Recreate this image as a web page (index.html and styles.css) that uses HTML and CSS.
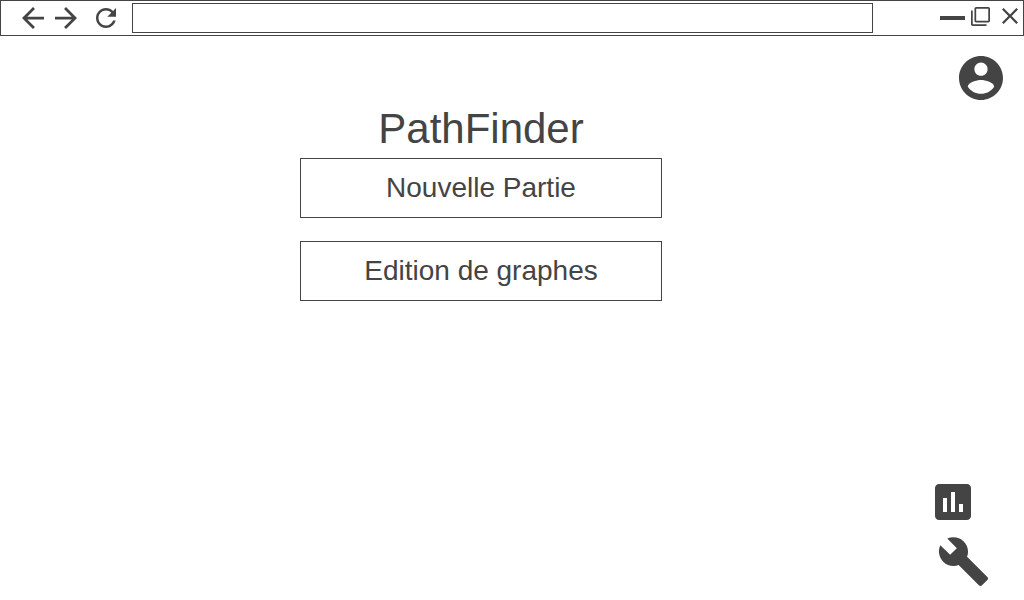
FILE: index.html
```html
<!DOCTYPE html>
<html lang="fr">
<head>
  <meta charset="utf-8">
  <meta name="viewport" content="width=device-width, initial-scale=1">
  <title>PathFinder</title>
  <link rel="stylesheet" href="styles.css">
</head>
<body class="page">
  <header class="browser-bar">
    <nav class="browser-nav" aria-label="Navigation">
      <button class="icon-button" type="button" aria-label="Page précédente">
        <svg class="icon-arrow" viewBox="4 4 16 16"><path d="M20 11H7.83l5.59-5.59L12 4l-8 8 8 8 1.41-1.41L7.83 13H20v-2z"/></svg>
      </button>
      <button class="icon-button" type="button" aria-label="Page suivante">
        <svg class="icon-arrow" viewBox="4 4 16 16"><path d="M12 4l-1.41 1.41L16.17 11H4v2h12.17l-5.58 5.59L12 20l8-8z"/></svg>
      </button>
      <button class="icon-button reload" type="button" aria-label="Actualiser">
        <svg class="icon-reload" viewBox="4 4 16 16"><path d="M17.65 6.35C16.2 4.9 14.21 4 12 4c-4.42 0-7.99 3.58-7.99 8s3.57 8 7.99 8c3.73 0 6.84-2.55 7.73-6h-2.08c-.82 2.33-3.04 4-5.65 4-3.31 0-6-2.69-6-6s2.69-6 6-6c1.66 0 3.14.69 4.22 1.78L13 11h7V4l-2.35 2.35z"/></svg>
      </button>
    </nav>
    <input class="address" type="text" aria-label="Adresse">
    <div class="window-controls">
      <button class="icon-button minimize" type="button" aria-label="Réduire">
        <svg class="icon-minimize" viewBox="0 0 25 4"><path d="M0 0h25v4H0z"/></svg>
      </button>
      <button class="icon-button" type="button" aria-label="Agrandir">
        <svg class="icon-restore" viewBox="1 1 22 22"><path d="M3 5H1v16c0 1.1.9 2 2 2h16v-2H3V5zm18-4H7c-1.100 0-2 .9-2 2v14c0 1.100.9 2 2 2h14c1.100 0 2-.9 2-2V3c0-1.100-.9-2-2-2zm0 16H7V3h14v14z"/></svg>
      </button>
      <button class="icon-button close" type="button" aria-label="Fermer">
        <svg class="icon-close" viewBox="5 5 14 14"><path d="M19 6.410L17.590 5 12 10.590 6.410 5 5 6.410 10.590 12 5 17.590 6.410 19 12 13.410 17.590 19 19 17.590 13.410 12z"/></svg>
      </button>
    </div>
  </header>

  <div class="content">
    <main class="menu">
      <h1 class="title">PathFinder</h1>
      <div class="menu-list">
        <button class="menu-button" type="button">Nouvelle Partie</button>
        <button class="menu-button" type="button">Edition de graphes</button>
      </div>
    </main>
    <aside class="rail">
      <button class="icon-button account" type="button" aria-label="Compte">
        <svg class="icon-account" viewBox="2 2 20 20"><path d="M12 2C6.480 2 2 6.480 2 12s4.480 10 10 10 10-4.480 10-10S17.520 2 12 2zm0 3c1.660 0 3 1.340 3 3s-1.340 3-3 3-3-1.340-3-3 1.340-3 3-3zm0 14.200c-2.500 0-4.710-1.280-6-3.220.03-1.990 4-3.080 6-3.080 1.990 0 5.970 1.090 6 3.080-1.290 1.940-3.500 3.220-6 3.220z"/></svg>
      </button>
      <div class="tools">
        <button class="icon-button stats" type="button" aria-label="Statistiques">
          <svg class="icon-stats" viewBox="3 3 18 18"><path d="M19 3H5c-1.100 0-2 .9-2 2v14c0 1.100.9 2 2 2h14c1.100 0 2-.9 2-2V5c0-1.100-.9-2-2-2zM9 17H7v-7h2v7zm4 0h-2V7h2v10zm4 0h-2v-4h2v4z"/></svg>
        </button>
        <button class="icon-button" type="button" aria-label="Paramètres">
          <svg class="icon-wrench" viewBox="1 1 22 22"><path d="M22.700 19l-9.100-9.100c.9-2.300.4-5-1.500-6.900-2-2-5-2.400-7.400-1.300L9 6 6 9 1.600 4.700C.4 7.100.9 10.100 2.900 12.100c1.900 1.900 4.600 2.400 6.900 1.500l9.100 9.100c.4.4 1 .4 1.400 0l2.300-2.300c.5-.4.5-1.100.1-1.400z"/></svg>
        </button>
      </div>
    </aside>
  </div>
</body>
</html>
```

FILE: styles.css
```css
* {
  box-sizing: border-box;
}

.page {
  display: flex;
  flex-direction: column;
  min-height: 100vh;
  margin: 0;
  background: #fff;
  color: #444;
  font-family: "Liberation Sans", Arial, sans-serif;
}

.icon-button {
  display: block;
  flex: none;
  padding: 0;
  border: 0;
  background: none;
  color: inherit;
  cursor: pointer;
}

.icon-button svg {
  display: block;
  fill: currentColor;
}

.browser-bar {
  display: flex;
  align-items: center;
  padding: 2px 5px 2px 21px;
  border: 1px solid #444;
}

.browser-nav {
  display: flex;
  align-items: center;
  gap: 11px;
  margin-right: 16px;
}

.reload {
  margin-left: 8px;
}

.address {
  flex: 1;
  min-width: 0;
  height: 30px;
  padding: 0 8px;
  border: 1px solid #444;
  background: #fff;
  color: inherit;
  font: inherit;
}

.window-controls {
  display: flex;
  align-items: center;
  gap: 6px;
  margin-left: 67px;
  padding-bottom: 4px;
}

.minimize {
  padding-top: 4px;
}

.close {
  margin-left: 6px;
}

.icon-arrow {
  width: 22px;
  height: 22px;
}

.icon-reload {
  width: 20px;
  height: 20px;
}

.icon-minimize {
  width: 25px;
  height: 4px;
}

.icon-restore {
  width: 19px;
  height: 19px;
}

.icon-close {
  width: 16px;
  height: 16px;
}

.content {
  display: grid;
  flex: 1;
  grid-template-columns: 300fr 362fr 362fr;
}

.menu {
  grid-column: 2;
  padding-top: 69px;
}

.title {
  margin: 0 0 5px;
  font-size: 42px;
  font-weight: 400;
  line-height: 48px;
  text-align: center;
}

.menu-list {
  display: grid;
  gap: 23px;
}

.menu-button {
  height: 60px;
  padding: 0 16px;
  border: 1px solid #444;
  background: #fff;
  color: inherit;
  font-family: inherit;
  font-size: 28px;
  cursor: pointer;
}

.rail {
  display: flex;
  flex-direction: column;
  align-items: flex-end;
  justify-content: space-between;
  padding: 20px 21px 14px 0;
}

.tools {
  display: grid;
  justify-items: end;
  gap: 17px;
  padding-right: 15px;
}

.stats {
  margin-right: 17px;
}

.icon-account {
  width: 44px;
  height: 44px;
}

.icon-stats {
  width: 36px;
  height: 36px;
}

.icon-wrench {
  width: 49px;
  height: 49px;
}
```
